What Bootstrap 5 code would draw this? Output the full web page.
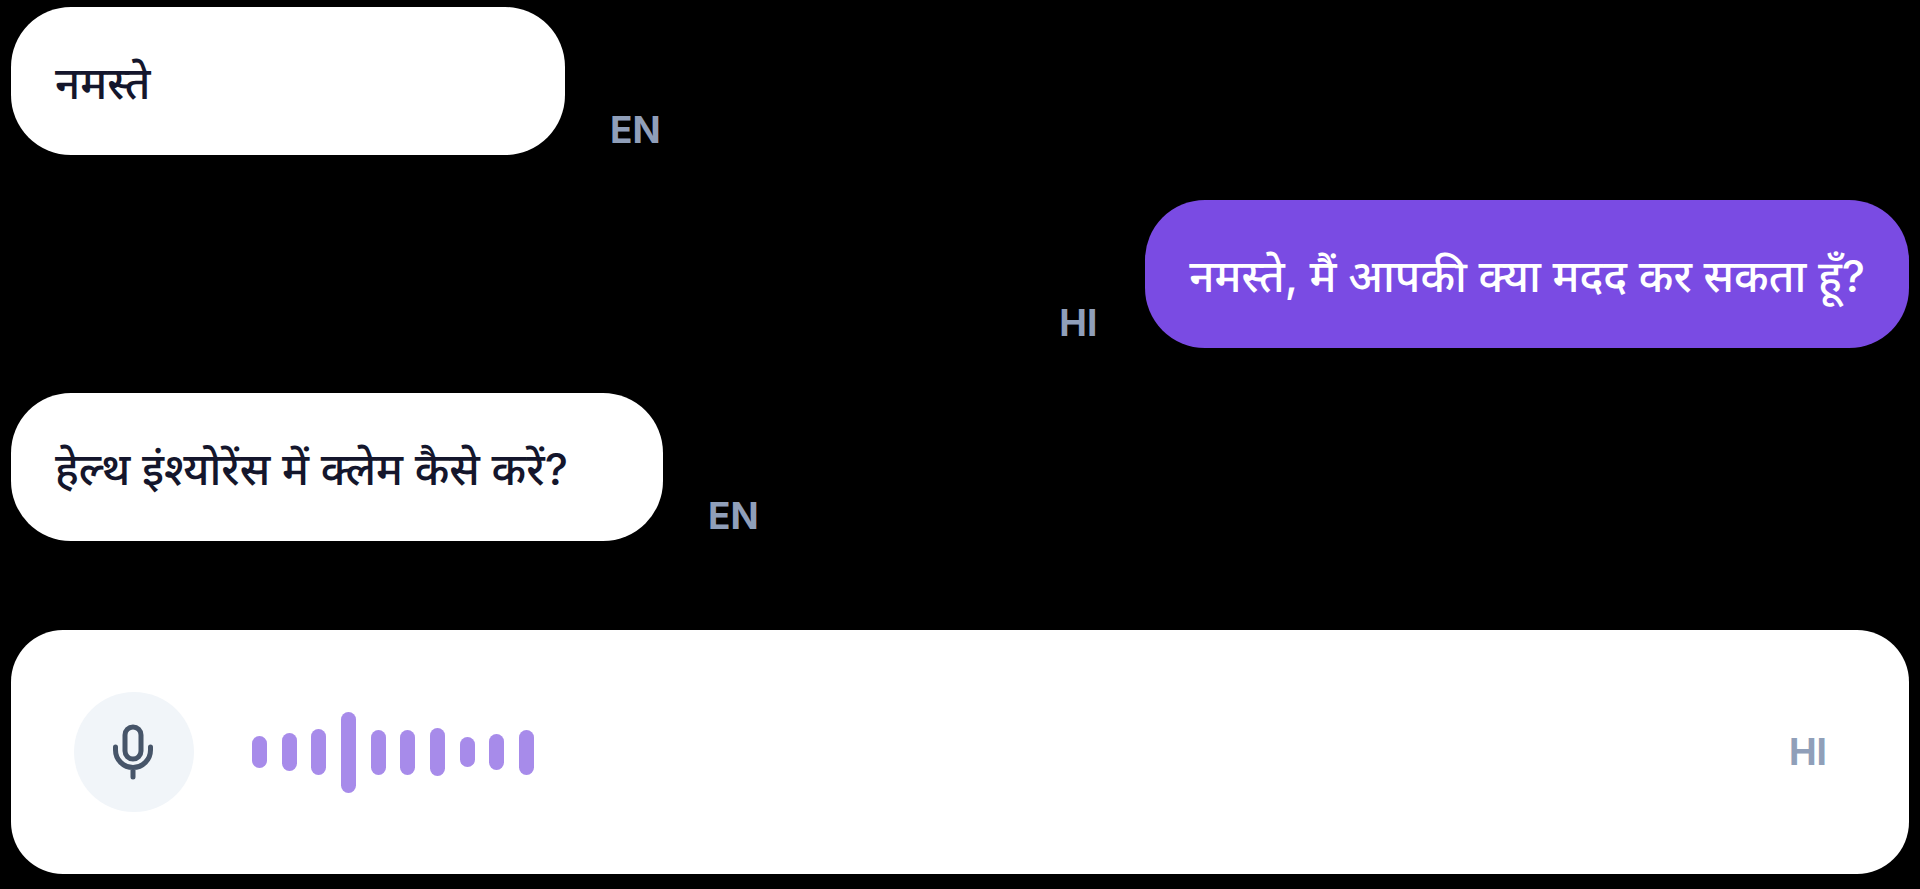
<!DOCTYPE html>
<html lang="hi">
<head>
<meta charset="utf-8">
<meta name="viewport" content="width=device-width, initial-scale=1">
<title>Voice chat</title>
<link href="https://cdn.jsdelivr.net/npm/bootstrap@5.3.0/dist/css/bootstrap.min.css" rel="stylesheet">
<style>
  body { background: #000; font-family: Inter, "Noto Sans Devanagari", "Noto Sans", sans-serif; }
  .chat { padding: 7px 11px 15px; }
  .thread { gap: 45px; margin-bottom: 89px; }
  .message { gap: 45px; }
  .message-reply { gap: 48px; }
  .bubble { padding: 44px 44px 40px; border-radius: 60px; font-size: 44px; line-height: 64px; font-weight: 500; background: #fff; color: #14162c; }
  .bubble-greeting { min-width: 554px; }
  .bubble-question { min-width: 652px; }
  .bubble-reply { background: #7a4be3; color: #fff; }
  .lang { font-size: 37px; line-height: 46px; font-weight: 700; color: #909fb9; }
  .message .lang { padding-bottom: 2px; }
  .recorder { background: #fff; border-radius: 52px; padding: 62px 82px 62px 63px; }
  .mic { width: 120px; height: 120px; background: #f1f5f9; color: #475569; margin-right: 58px; }
  .wave { width: 282px; height: 82px; }
  .wave span { width: 15px; border-radius: 8px; background: #a78bea; }
</style>
</head>
<body>
<main class="chat">
  <section class="thread d-flex flex-column" aria-label="Conversation">
    <div class="message d-flex align-items-end">
      <div class="bubble bubble-greeting">नमस्ते</div>
      <span class="lang">EN</span>
    </div>
    <div class="message message-reply d-flex align-items-end justify-content-end">
      <span class="lang">HI</span>
      <div class="bubble bubble-reply">नमस्ते, मैं आपकी क्या मदद कर सकता हूँ?</div>
    </div>
    <div class="message d-flex align-items-end">
      <div class="bubble bubble-question">हेल्थ इंश्योरेंस में क्लेम कैसे करें?</div>
      <span class="lang">EN</span>
    </div>
  </section>
  <section class="recorder d-flex align-items-center" aria-label="Voice input">
    <button type="button" class="mic btn border-0 rounded-circle p-0 d-flex align-items-center justify-content-center flex-shrink-0" aria-label="Record">
      <svg width="60" height="60" viewBox="0 0 60 60" fill="none" stroke="currentColor" stroke-width="5" stroke-linecap="round" aria-hidden="true">
        <rect x="21" y="5" width="16" height="32" rx="8"/>
        <path d="M11.500 25v3a17.500 17.500 0 0 0 35 0v-3M29 46v9"/>
      </svg>
    </button>
    <div class="wave d-flex align-items-center justify-content-between" aria-hidden="true">
      <span style="height:32px"></span>
      <span style="height:38px"></span>
      <span style="height:46px"></span>
      <span style="height:81px"></span>
      <span style="height:45px"></span>
      <span style="height:45px"></span>
      <span style="height:48px"></span>
      <span style="height:30px"></span>
      <span style="height:36px"></span>
      <span style="height:45px"></span>
    </div>
    <span class="lang ms-auto">HI</span>
  </section>
</main>
<script src="https://cdn.jsdelivr.net/npm/bootstrap@5.3.0/dist/js/bootstrap.bundle.min.js"></script>
</body>
</html>
